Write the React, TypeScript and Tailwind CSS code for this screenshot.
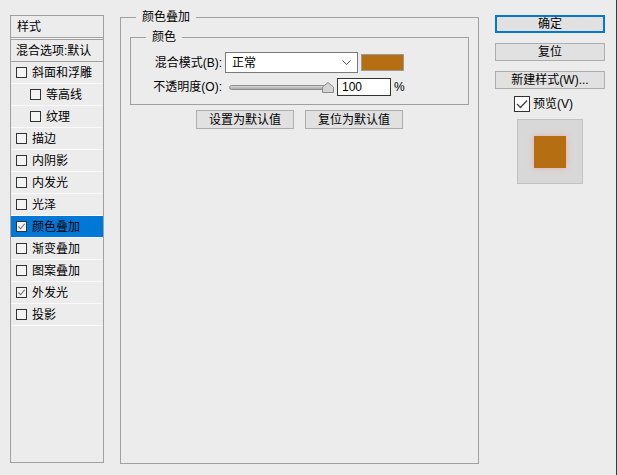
import React from "react";

// Photoshop "图层样式" dialog, colour overlay page

const FONT = "font-['Liberation_Sans','Noto_Sans_CJK_SC',sans-serif]";

type Item = { label: string; indent?: boolean; checked?: boolean; selected?: boolean };

const ITEMS: Item[] = [
  { label: "斜面和浮雕" },
  { label: "等高线", indent: true },
  { label: "纹理", indent: true },
  { label: "描边" },
  { label: "内阴影" },
  { label: "内发光" },
  { label: "光泽" },
  { label: "颜色叠加", checked: true, selected: true },
  { label: "渐变叠加" },
  { label: "图案叠加" },
  { label: "外发光", checked: true },
  { label: "投影" },
];

function Check({ checked, size = 11 }: { checked?: boolean; size?: number }) {
  return (
    <span
      className="flex shrink-0 items-center justify-center border border-[#333333] bg-[#f4f4f4]"
      style={{ width: size, height: size }}
    >
      {checked && (
        <svg width={size - 2} height={size - 2} viewBox="0 0 10 10">
          <polyline points="1.5,5 4,7.5 8.5,2" fill="none" stroke="#777777" strokeWidth="1.2" />
        </svg>
      )}
    </span>
  );
}

function StyleList() {
  return (
    <div className="mt-[15px] ml-[10px] flex h-[448px] w-[94px] flex-col border border-[#a0a0a0]">
      <div className="flex h-[22px] items-center border-b border-[#a0a0a0] pl-[6px]">样式</div>
      <div className="h-[1px] bg-[#f4f4f4]" />
      <div className="flex h-[23px] items-center border-y border-[#a0a0a0] pl-[5px]">混合选项:默认</div>
      {ITEMS.map((it) => (
        <div
          key={it.label}
          className={
            "flex h-[22px] items-center gap-[5px] border-b border-[#fafafa] " +
            (it.indent ? "pl-[19px] " : "pl-[5px] ") +
            (it.selected ? "bg-[#0078d7] text-white" : "")
          }
        >
          <Check checked={it.checked} />
          <span className={it.selected ? "text-black" : ""}>{it.label}</span>
        </div>
      ))}
    </div>
  );
}

function Button({ children, primary, className = "" }: { children: React.ReactNode; primary?: boolean; className?: string }) {
  return (
    <div
      className={
        "flex items-center justify-center bg-[#e1e1e1] leading-none " +
        (primary ? "border-2 border-[#0078d7] " : "border border-[#adadad] ") +
        className
      }
    >
      {children}
    </div>
  );
}

function Slider() {
  return (
    <div className="relative ml-[7px] flex h-[12px] w-[105px] items-center">
      <div className="h-[5px] w-[98px] rounded-full border border-[#8f8f8f] bg-[linear-gradient(#d8d8d8,#a8a8a8)]" />
      <svg className="absolute right-0 top-[1px]" width="12" height="11" viewBox="0 0 12 11">
        <path d="M0.5,10.5 L0.5,5 L6,0.5 L11.5,5 L11.5,10.5 Z" fill="#d4d4d4" stroke="#8a8a8a" />
      </svg>
    </div>
  );
}

function Overlay() {
  return (
    <fieldset className="mt-[9px] ml-[16px] h-[455px] w-[359px] border border-[#a0a0a0] p-0">
      <legend className="ml-[15px] px-[6px] leading-[16px]">颜色叠加</legend>
      <div className="px-[9px] pt-[4px]">
        <fieldset className="h-[76px] border border-[#a0a0a0] p-0">
          <legend className="ml-[15px] px-[6px] leading-[16px]">颜色</legend>
          <div className="mt-[7px] flex h-[21px] items-center">
            <span className="w-[91px] text-right">混合模式(B):</span>
            <div className="ml-[3px] flex h-[21px] w-[133px] items-center justify-between border border-[#7a7a7a] bg-white pl-[6px] pr-[6px]">
              <span>正常</span>
              <svg width="9" height="6" viewBox="0 0 9 6">
                <polyline points="0.5,0.5 4.5,4.5 8.5,0.5" fill="none" stroke="#555555" />
              </svg>
            </div>
            <div className="ml-[3px] h-[17px] w-[43px] border border-[#9a9a9a] bg-[#b56e12]" />
          </div>
          <div className="mt-[5px] flex h-[18px] items-center">
            <span className="w-[91px] text-right">不透明度(O):</span>
            <Slider />
            <div className="ml-[3px] flex h-[18px] w-[54px] items-center border border-[#333333] bg-white pl-[4px]">100</div>
            <span className="ml-[3px]">%</span>
          </div>
        </fieldset>
        <div className="mt-[5px] flex justify-center gap-[11px]">
          <Button className="h-[19px] w-[98px]">设置为默认值</Button>
          <Button className="h-[19px] w-[98px]">复位为默认值</Button>
        </div>
      </div>
    </fieldset>
  );
}

function Actions() {
  return (
    <div className="mt-[15px] ml-[16px] flex w-[110px] flex-col">
      <Button primary className="h-[18px]">确定</Button>
      <Button className="mt-[10px] h-[18px]">复位</Button>
      <Button className="mt-[10px] h-[18px]">新建样式(W)...</Button>
      <div className="mt-[7px] flex h-[16px] items-center gap-[3px] pl-[19px]">
        <span className="flex h-[16px] w-[16px] items-center justify-center border border-[#333333] bg-white">
          <svg width="12" height="10" viewBox="0 0 12 10">
            <polyline points="1,5 4.5,8.5 11,1.5" fill="none" stroke="#444444" strokeWidth="1.3" />
          </svg>
        </span>
        <span>预览(V)</span>
      </div>
      <div className="mt-[7px] flex h-[65px] w-[66px] items-center justify-center self-center border border-[#c2c2c2] bg-[#d8d8d8]">
        <div className="h-[32px] w-[32px] bg-[#b56e12] shadow-[0_0_6px_rgba(255,120,110,0.45)]" />
      </div>
    </div>
  );
}

export default function App() {
  return (
    <div className={"flex h-[475px] w-[617px] items-start border-r border-[#3a3a3a] bg-[#ececec] text-[12px] leading-[16px] text-black " + FONT}>
      <StyleList />
      <Overlay />
      <Actions />
    </div>
  );
}
